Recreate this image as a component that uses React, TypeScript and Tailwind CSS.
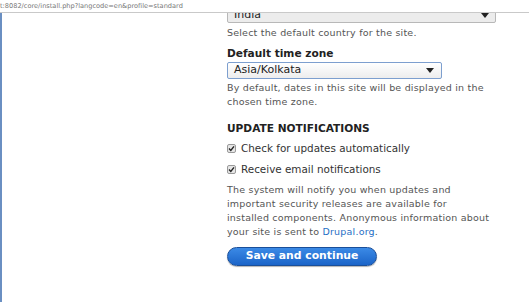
import React from "react";

function Arrow() {
  return (
    <svg width="8" height="5" viewBox="0 0 8 5" className="shrink-0">
      <path d="M0 0 L8 0 L4 5 Z" fill="#222" />
    </svg>
  );
}

function Check() {
  return (
    <span className="flex h-[9px] w-[9px] items-center justify-center rounded-[2px] border border-[#9a9a9a] bg-[#e6e6e6]">
      <svg width="7" height="7" viewBox="0 0 7 7">
        <path d="M1 3.6 L2.8 5.4 L6 1.4" fill="none" stroke="#222" strokeWidth="1.4" />
      </svg>
    </span>
  );
}

export default function App() {
  return (
    <div
      className="flex h-[302px] w-[529px] flex-col overflow-hidden bg-white text-[#555]"
      style={{ fontFamily: '"DejaVu Sans", Verdana, sans-serif' }}
    >
      <div className="relative z-10 flex h-[13px] shrink-0 items-center border-b border-[#c9c9c9] bg-white">
        <span className="text-[6.6px] leading-none text-[#777]">
          t:8082/core/install.php?langcode=en&amp;profile=standard
        </span>
      </div>
      <div className="flex flex-1 border-l-2 border-[#6a8fc2]">
        <div className="ml-[225px] flex w-[272px] flex-col">
          <div className="mt-[-6px] flex h-[16px] w-[269px] items-center justify-between rounded-[2px] border border-[#b8b8b8] bg-[#ececec] pl-[6px] pr-[6px] text-[11px] text-[#222]">
            <span>India</span>
            <Arrow />
          </div>
          <p className="mt-[3px] text-[9.5px] leading-[14px] tracking-[0.2px]">Select the default country for the site.</p>

          <p className="mt-[6px] text-[10.6px] font-bold leading-[14px] text-[#222]">Default time zone</p>
          <div className="mt-[2px] flex h-[17px] w-[215px] items-center justify-between rounded-[2px] border border-[#7d9fcf] bg-gradient-to-b from-white to-[#ededed] pl-[6px] pr-[7px] text-[11px] text-[#222]">
            <span>Asia/Kolkata</span>
            <Arrow />
          </div>
          <p className="mt-[2px] text-[9.5px] leading-[14px] tracking-[0.2px]">
            By default, dates in this site will be displayed in the
            <br />
            chosen time zone.
          </p>

          <p className="mt-[12px] text-[10.6px] font-bold leading-[14px] text-[#222]">UPDATE NOTIFICATIONS</p>
          <label className="mt-[6px] flex items-center gap-[5px] text-[10.4px] leading-[14px] text-[#333]">
            <Check />
            <span>Check for updates automatically</span>
          </label>
          <label className="mt-[7px] flex items-center gap-[5px] text-[10.4px] leading-[14px] text-[#333]">
            <Check />
            <span>Receive email notifications</span>
          </label>
          <p className="mt-[7px] text-[9.5px] leading-[14px] tracking-[0.2px]">
            The system will notify you when updates and
            <br />
            important security releases are available for
            <br />
            installed components. Anonymous information about
            <br />
            your site is sent to <span className="text-[#1f6fc5]">Drupal.org</span>.
          </p>
          <button className="mt-[8px] h-[19px] w-[150px] rounded-full border border-[#1a4f9a] bg-gradient-to-b from-[#3b8ae6] to-[#1b64c8] text-[10.8px] font-bold leading-none text-white shadow-[0_1px_1px_rgba(0,0,0,0.3)]">
            Save and continue
          </button>
        </div>
      </div>
    </div>
  );
}
